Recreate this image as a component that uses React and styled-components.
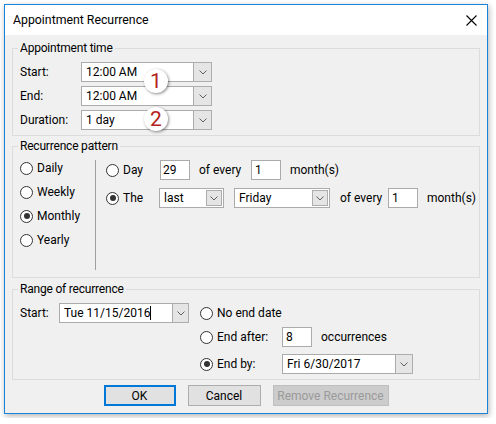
import React from 'react'
import styled, { createGlobalStyle } from 'styled-components'

const GlobalStyle = createGlobalStyle`
  body {
    margin: 0;
    background: #fff;
    font-family: Roboto, "Noto Sans", sans-serif;
    font-size: 12px;
    color: #000;
  }
  * { box-sizing: border-box; }
`

const Window = styled.div`
  position: relative;
  margin: 4px;
  width: 484px;
  height: 410px;
  border: 1px solid #1883d7;
  background: #f0f0f0;
  box-shadow: 1px 2px 6px rgba(0, 0, 0, 0.3);
  display: flex;
  flex-direction: column;
`

const TitleBar = styled.div`
  height: 30px;
  background: #fff;
  display: flex;
  align-items: center;
  justify-content: space-between;
  padding: 0 10px 0 8px;
  font-size: 12.3px;
`

const Body = styled.div`
  padding: 6px 7px 7px;
  display: flex;
  flex-direction: column;
`

const Group = styled.fieldset`
  margin: ${p => p.$top || 0}px 0 0;
  padding: 0 6px ${p => p.$pb || 0}px 7px;
  border: 1px solid #dcdcdc;
  min-width: 0;

  legend {
    margin-left: -2px;
    padding: 0 2px;
    line-height: 14px;
    letter-spacing: -0.2px;
  }
`

const TimeGrid = styled.div`
  padding-top: 7px;
  display: grid;
  grid-template-columns: 61px 113px 18px;
  grid-auto-rows: 20px;
  row-gap: 4px;
  align-items: center;
`

const Text = styled.span`
  display: inline-block;
  flex-shrink: 0;
  white-space: nowrap;
  width: ${p => (p.$w ? `${p.$w}px` : 'auto')};
  margin-left: ${p => p.$ml || 0}px;
  line-height: 20px;
`

const TextBox = styled.div`
  flex-shrink: 0;
  height: 20px;
  width: ${p => (p.$w ? `${p.$w}px` : '100%')};
  margin-left: ${p => p.$ml || 0}px;
  border: 1px solid #ababab;
  background: #fff;
  padding-left: ${p => p.$pad ?? 4}px;
  display: flex;
  align-items: center;
  white-space: nowrap;
`

const Caret = styled.span`
  display: inline-block;
  width: 1px;
  height: 14px;
  background: #000;
`

const DropButton = styled.div`
  flex-shrink: 0;
  height: 20px;
  width: ${p => p.$w || 18}px;
  border: 1px solid #adadad;
  border-left: ${p => (p.$inset ? '1px solid #adadad' : 'none')};
  background: #e5e5e5;
  display: flex;
  align-items: center;
  justify-content: center;
`

const Select = styled.div`
  flex-shrink: 0;
  height: 20px;
  width: ${p => p.$w}px;
  margin-left: ${p => p.$ml || 0}px;
  border: 1px solid #ababab;
  background: #fff;
  display: flex;
  align-items: center;
  padding: 1px;
  padding-left: 4px;

  span { flex: 1; }
  ${DropButton} {
    height: 16px;
    width: 16px;
    border: 1px solid #adadad;
  }
`

const Combo = styled.div`
  display: flex;
  flex-shrink: 0;
  margin-left: ${p => p.$ml || 0}px;
`

const PatternBody = styled.div`
  display: flex;
  padding-bottom: 7px;
`

const FreqCol = styled.div`
  width: 75px;
  flex-shrink: 0;
  padding-top: 3px;
  display: flex;
  flex-direction: column;
`

const Separator = styled.div`
  width: 1px;
  flex-shrink: 0;
  height: 110px;
  margin-top: 7px;
  background: #a0a0a0;
`

const MonthCol = styled.div`
  padding: 7px 0 0 10px;
  display: flex;
  flex-direction: column;
  gap: 8px;
`

const Row = styled.div`
  display: flex;
  align-items: center;
  height: ${p => p.$h || 20}px;
  margin-top: ${p => p.$mt || 0}px;
`

const RadioLabel = styled.label`
  display: flex;
  flex-shrink: 0;
  align-items: center;
  gap: 4px;
  width: ${p => (p.$w ? `${p.$w}px` : 'auto')};
  height: ${p => p.$h || 20}px;
  white-space: nowrap;
`

const Dot = styled.span`
  width: 13px;
  height: 13px;
  border-radius: 50%;
  border: 1px solid #333;
  background: #fff;
  display: flex;
  align-items: center;
  justify-content: center;

  &::after {
    content: '';
    width: 6px;
    height: 6px;
    border-radius: 50%;
    background: ${p => (p.$on ? '#333' : 'transparent')};
  }
`

const RangeBody = styled.div`
  display: flex;
  padding: 7px 0 5px;
`

const StartPart = styled.div`
  display: flex;
  flex-shrink: 0;
  align-items: center;
  height: 20px;
`

const EndCol = styled.div`
  margin-left: 11px;
  display: flex;
  flex-direction: column;
`

const Buttons = styled.div`
  margin-top: 5px;
  display: flex;
  justify-content: center;
  gap: 12px;
`

const Button = styled.div`
  height: 21px;
  width: ${p => p.$w}px;
  display: flex;
  align-items: center;
  justify-content: center;
  background: ${p => (p.$disabled ? '#cccccc' : '#e1e1e1')};
  color: ${p => (p.$disabled ? '#9a9a9a' : '#000')};
  border: ${p => (p.$primary ? '2px solid #0078d7' : p.$disabled ? '1px solid #bfbfbf' : '1px solid #adadad')};
`

const Marker = styled.div`
  position: absolute;
  left: 139px;
  top: ${p => p.$top}px;
  width: 24px;
  height: 24px;
  border-radius: 50%;
  background: #fff;
  box-shadow: 1px 1px 3px rgba(0, 0, 0, 0.45);
  display: flex;
  align-items: center;
  justify-content: center;
  color: #b3241c;
  font-size: 21px;
  line-height: 1;
`

function Chevron() {
  return (
    <svg width="8" height="5" viewBox="0 0 8 5">
      <polyline points="0.5,0.5 4,4 7.5,0.5" fill="none" stroke="#606060" strokeWidth="1" />
    </svg>
  )
}

function CloseIcon() {
  return (
    <svg width="11" height="11" viewBox="0 0 11 11">
      <path d="M0.5 0.5 L10.5 10.5 M10.5 0.5 L0.5 10.5" stroke="#000" strokeWidth="1.1" />
    </svg>
  )
}

function Radio({ on, label, w, h }) {
  return (
    <RadioLabel $w={w} $h={h}>
      <Dot $on={on} />
      {label}
    </RadioLabel>
  )
}

function TimeCombo({ value }) {
  return (
    <>
      <TextBox>{value}</TextBox>
      <DropButton>
        <Chevron />
      </DropButton>
    </>
  )
}

export default function App() {
  return (
    <>
      <GlobalStyle />
      <Window>
        <TitleBar>
          <span>Appointment Recurrence</span>
          <CloseIcon />
        </TitleBar>
        <Body>
          <Group $pb={5}>
            <legend>Appointment time</legend>
            <TimeGrid>
              <Text>Start:</Text>
              <TimeCombo value="12:00 AM" />
              <Text>End:</Text>
              <TimeCombo value="12:00 AM" />
              <Text>Duration:</Text>
              <TimeCombo value="1 day" />
            </TimeGrid>
          </Group>

          <Group $top={3}>
            <legend>Recurrence pattern</legend>
            <PatternBody>
              <FreqCol>
                <Radio label="Daily" h={24} />
                <Radio label="Weekly" h={24} />
                <Radio label="Monthly" h={24} on />
                <Radio label="Yearly" h={24} />
              </FreqCol>
              <Separator />
              <MonthCol>
                <Row>
                  <Radio label="Day" w={54} />
                  <TextBox $w={30} $pad={2}>29</TextBox>
                  <Text $ml={9} $w={52}>of every</Text>
                  <TextBox $w={30} $pad={3}>1</TextBox>
                  <Text $ml={9}>month(s)</Text>
                </Row>
                <Row>
                  <Radio label="The" w={53} on />
                  <Select $w={65}>
                    <span>last</span>
                    <DropButton $inset>
                      <Chevron />
                    </DropButton>
                  </Select>
                  <Select $w={96} $ml={10}>
                    <span>Friday</span>
                    <DropButton $inset>
                      <Chevron />
                    </DropButton>
                  </Select>
                  <Text $ml={10} $w={48}>of every</Text>
                  <TextBox $w={30} $pad={3}>1</TextBox>
                  <Text $ml={9}>month(s)</Text>
                </Row>
              </MonthCol>
            </PatternBody>
          </Group>

          <Group $top={4}>
            <legend>Range of recurrence</legend>
            <RangeBody>
              <StartPart>
                <Text $w={39}>Start:</Text>
                <Combo>
                  <TextBox $w={114}>
                    Tue 11/15/2016
                    <Caret />
                  </TextBox>
                  <DropButton $w={16}>
                    <Chevron />
                  </DropButton>
                </Combo>
              </StartPart>
              <EndCol>
                <Radio label="No end date" w={82} />
                <Row $mt={4}>
                  <Radio label="End after:" w={82} />
                  <TextBox $w={30} $pad={3}>8</TextBox>
                  <Text $ml={9}>occurrences</Text>
                </Row>
                <Row $mt={7}>
                  <Radio label="End by:" w={82} on />
                  <Combo>
                    <TextBox $w={114}>Fri 6/30/2017</TextBox>
                    <DropButton $w={17}>
                      <Chevron />
                    </DropButton>
                  </Combo>
                </Row>
              </EndCol>
            </RangeBody>
          </Group>

          <Buttons>
            <Button $w={72} $primary>OK</Button>
            <Button $w={73}>Cancel</Button>
            <Button $w={116} $disabled>Remove Recurrence</Button>
          </Buttons>
        </Body>

        <Marker $top={64}>1</Marker>
        <Marker $top={102}>2</Marker>
      </Window>
    </>
  )
}
